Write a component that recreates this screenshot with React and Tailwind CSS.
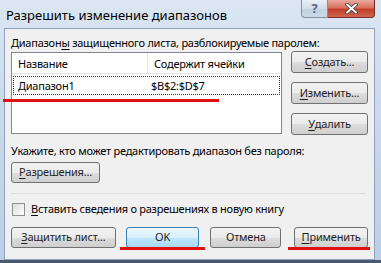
const font = { fontFamily: '"Noto Sans", "Open Sans", sans-serif' }

function Btn({ children, className = '', primary = false }) {
  return (
    <div
      className={`h-[21px] flex items-center justify-center rounded-[3px] border text-[11px] tracking-[-0.2px] text-[#1e1e1e] ${
        primary
          ? 'border-[#3c7fb1] bg-[linear-gradient(180deg,#eaf6fd_0%,#d9f0fc_50%,#bee6fd_51%,#a7d9f5_100%)]'
          : 'border-[#707070] bg-[linear-gradient(180deg,#f2f2f2_0%,#ebebeb_50%,#dddddd_51%,#cfcfcf_100%)]'
      } ${className}`}
    >
      {children}
    </div>
  )
}

const U = ({ children }) => <span className="underline underline-offset-2">{children}</span>

export default function App() {
  return (
    <div
      className="relative w-[381px] h-[263px] overflow-hidden bg-[linear-gradient(180deg,#dbe6f2_0%,#cbdaeb_40%,#bccfe6_100%)] border-b-[3px] border-[#4a5a6c]"
      style={font}
    >
      {/* title bar */}
      <div className="h-[28px] flex items-start">
        <div className="pl-[6px] pt-[6px] text-[13px] leading-[18px] text-black">Разрешить изменение диапазонов</div>
        <div className="ml-auto mr-[6px] flex">
          <div className="w-[27px] h-[18px] rounded-bl-[4px] border border-t-0 border-[#7f8fa3] bg-[linear-gradient(180deg,#e9eff6_0%,#d3dde9_50%,#c1cfdf_51%,#cdd9e7_100%)] flex items-center justify-center text-[13px] font-bold text-[#56657a]">
            ?
          </div>
          <div className="w-[47px] h-[18px] rounded-br-[4px] border border-t-0 border-l-0 border-[#7b2c24] bg-[linear-gradient(180deg,#e9a99c_0%,#d8715e_45%,#c2402a_55%,#d0654e_100%)] flex items-center justify-center">
            <svg width="13" height="11" viewBox="0 0 13 11">
              <path d="M2 1.5 L11 9.5 M11 1.5 L2 9.5" stroke="#3a3a3a" strokeWidth="3.6" strokeLinecap="round" />
              <path d="M2 1.5 L11 9.5 M11 1.5 L2 9.5" stroke="#ffffff" strokeWidth="2" strokeLinecap="round" />
            </svg>
          </div>
        </div>
      </div>

      {/* client area */}
      <div className="ml-[4px] mr-[6px] h-[232px] border border-[#8ea2bb] bg-[#f0f0f0] px-[6px] text-[11px] tracking-[-0.25px] text-black">
        <div className="h-[23px] pt-[7px] leading-[14px]">
          Диапазон<U>ы</U> защищенного листа, разблокируемые паролем:
        </div>
        <div className="flex">
          <div className="w-[271px] h-[82px] border border-[#828790] bg-white">
            <div className="flex h-[21px] border-b border-[#e5e5e5] leading-[21px]">
              <div className="w-[136px] pl-[6px] border-r border-[#e5e5e5]">Название</div>
              <div className="pl-[6px]">Содержит ячейки</div>
            </div>
            <div className="mt-[2px] mx-[1px] h-[19px] border border-dotted border-[#333] flex leading-[17px]">
              <div className="w-[137px] pl-[4px]">Диапазон1</div>
              <div>$B$2:$D$7</div>
            </div>
          </div>
          <div className="ml-[9px] flex flex-col gap-[9px] -mt-[1px]">
            <Btn className="w-[77px] h-[22px]"><U>С</U>оздать...</Btn>
            <Btn className="w-[77px] h-[22px]"><U>И</U>зменить...</Btn>
            <Btn className="w-[77px] h-[22px]"><U>У</U>далить</Btn>
          </div>
        </div>
        <div className="mt-[9px] leading-[14px]">Укажите, кто может редактировать диапазон без пароля:</div>
        <Btn className="mt-[4px] w-[89px] h-[21px]"><U>Р</U>азрешения...</Btn>
        <div className="mt-[10px] h-px bg-[#dcdcdc] mr-[2px]" />
        <div className="mt-[8px] flex items-center gap-[6px] leading-[14px]">
          <div className="ml-[1px] w-[13px] h-[13px] border border-[#8e8f8f] bg-[linear-gradient(135deg,#dcdcdc,#ffffff)]" />
          <div><U>В</U>ставить сведения о разрешениях в новую книгу</div>
        </div>
        <div className="mt-[11px] flex">
          <Btn className="w-[105px]"><U>З</U>ащитить лист...</Btn>
          <Btn primary className="ml-[10px] w-[74px]">OK</Btn>
          <Btn className="ml-[11px] w-[71px]">Отмена</Btn>
          <Btn className="ml-[13px] w-[74px]"><U>П</U>рименить</Btn>
        </div>
      </div>

      {/* red annotation marks */}
      <div className="absolute left-[3px] top-[99px] w-[216px] h-[3px] bg-[#e01010]" />
      <div className="absolute left-[120px] top-[247px] w-[85px] h-[3px] bg-[#e01010]" />
      <div className="absolute left-[288px] top-[247px] w-[82px] h-[3px] bg-[#e01010]" />
    </div>
  )
}
